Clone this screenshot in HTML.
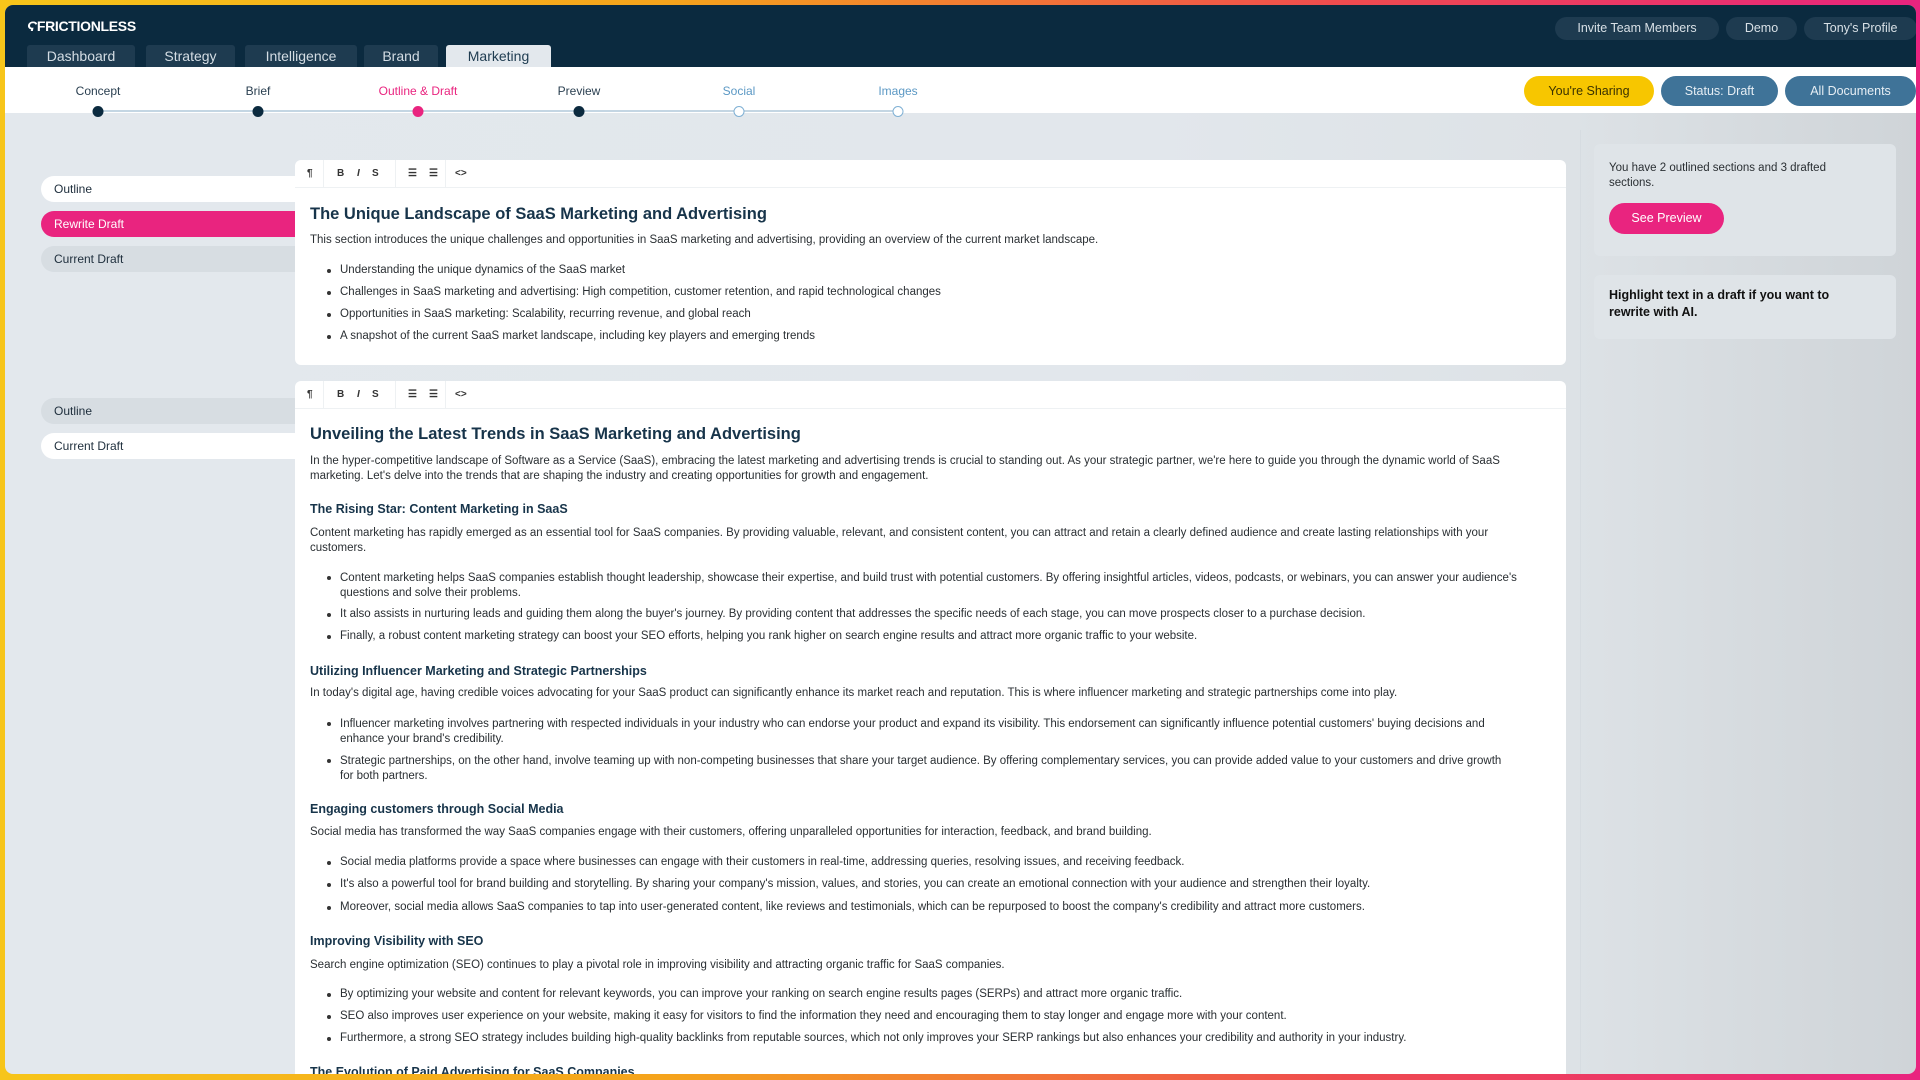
<!DOCTYPE html>
<html><head><meta charset="utf-8"><style>
*{box-sizing:border-box;margin:0;padding:0}
body{width:1920px;height:1080px;overflow:hidden;font-family:"Liberation Sans",sans-serif;background:linear-gradient(90deg,#f7c51a 0%,#f5a31c 35%,#ef4b4f 70%,#e9247f 100%);position:relative}
.frame{position:absolute;left:5px;top:5px;width:1911px;height:1069px;border-radius:8px;overflow:hidden;background:linear-gradient(90deg,#e3e8ed 0%,#e2e7ec 60%,#dde2e6 82%,#cfd4d8 100%)}
.hdr{position:absolute;left:0;top:0;width:100%;height:62px;background:#0b2a3f}
.logo{position:absolute;left:22px;top:13px;color:#fff;font-weight:bold;font-size:14px;letter-spacing:-0.3px}
.tab{position:absolute;top:40px;height:22px;background:#1e3b50;color:#d4dde4;font-size:14px;text-align:center;line-height:22px;border-radius:3px 3px 0 0}
.tab.on{background:#e3e8ed;color:#1e3b50}
.tb{position:absolute;top:12px;height:23px;background:#1e3b50;color:#d8e0e6;font-size:12.5px;line-height:23px;text-align:center;border-radius:12px}
.step{position:absolute;top:62px;left:0;width:100%;height:46px;background:#fff}
.sl{position:absolute;top:17px;font-size:12px;color:#2a3f50;transform:translateX(-50%);white-space:nowrap}
.line{position:absolute;top:43px;height:2px;background:#c4d6e3;left:93px;width:800px}
.dot{position:absolute;top:39px;width:11px;height:11px;border-radius:50%;background:#0b2a3f;transform:translateX(-50%)}
.dot.o{background:#fff;border:1.5px solid #7fb0d4}
.pb{position:absolute;top:9px;height:30px;border-radius:15px;font-size:12.5px;line-height:30px;text-align:center;color:#e6eef4;background:#3f7398}
.side{position:absolute;left:36px;width:260px;height:26px;border-radius:13px 0 0 13px;font-size:12px;line-height:26px;padding-left:13px;color:#1e2e3c;background:#fff}
.card{position:absolute;left:290px;width:1271px;background:#fff;border-radius:6px}
.tool{height:28px;border-bottom:1px solid #eef1f3;position:relative;font-size:10px;color:#333;font-weight:bold}
.tool span{position:absolute;top:8px}
.tool i.sep{position:absolute;top:0;width:1px;height:28px;background:#eef1f3}
.t{position:absolute;left:15px;white-space:nowrap;font-size:11.5px;color:#2a2f33}
.b{left:45px}
.b:before{content:"";position:absolute;left:-13px;top:5px;width:4px;height:4px;border-radius:50%;background:#333}
h1{position:absolute;left:15px;font-size:16.5px;color:#17344a;white-space:nowrap}
h2{position:absolute;left:15px;font-size:12.5px;color:#17344a;white-space:nowrap}
.lh{line-height:15px}
.rc{position:absolute;left:1589px;width:302px;background:#dfe4e8;border-radius:6px}
</style></head><body>
<div class="frame">
<div class="hdr">
<div class="logo"><span style="font-style:italic">&#x03DA;</span>FRICTIONLESS</div>
<div class="tab" style="left:22px;width:108px">Dashboard</div>
<div class="tab" style="left:141px;width:89px">Strategy</div>
<div class="tab" style="left:240px;width:112px">Intelligence</div>
<div class="tab" style="left:359px;width:74px">Brand</div>
<div class="tab on" style="left:441px;width:105px">Marketing</div>
<div class="tb" style="left:1550px;width:164px">Invite Team Members</div>
<div class="tb" style="left:1721px;width:71px">Demo</div>
<div class="tb" style="left:1799px;width:113px">Tony's Profile</div>
</div>
<div class="step">
<div class="line"></div>
<div class="sl" style="left:93px">Concept</div>
<div class="sl" style="left:253px">Brief</div>
<div class="sl" style="left:413px;color:#e9247f">Outline &amp; Draft</div>
<div class="sl" style="left:574px">Preview</div>
<div class="sl" style="left:734px;color:#5b98c4">Social</div>
<div class="sl" style="left:893px;color:#5b98c4">Images</div>
<div class="dot" style="left:93px"></div><div class="dot" style="left:253px"></div>
<div class="dot" style="left:413px;background:#e9247f"></div><div class="dot" style="left:574px"></div>
<div class="dot o" style="left:734px"></div><div class="dot o" style="left:893px"></div>
<div class="pb" style="left:1519px;width:130px;background:#f7c600;color:#3a3200">You're Sharing</div>
<div class="pb" style="left:1656px;width:117px">Status: Draft</div>
<div class="pb" style="left:1780px;width:131px">All Documents</div>
</div>

<div class="side" style="top:171px">Outline</div>
<div class="side" style="top:206px;background:#e9247f;color:#fff">Rewrite Draft</div>
<div class="side" style="top:241px;background:#d7dde2">Current Draft</div>
<div class="side" style="top:393px;background:#d7dde2">Outline</div>
<div class="side" style="top:428px">Current Draft</div>

<div class="card" style="top:155px;height:205px">
<div class="tool"><span style="left:12px">¶</span><i class="sep" style="left:28px"></i><span style="left:42px">B</span><span style="left:62px;font-style:italic">I</span><span style="left:77px">S</span><i class="sep" style="left:100px"></i><span style="left:113px">☰</span><span style="left:134px">☰</span><i class="sep" style="left:150px"></i><span style="left:160px">&lt;&gt;</span></div>
<h1 style="top:45px">The Unique Landscape of SaaS Marketing and Advertising</h1>
<div class="t" style="top:74px">This section introduces the unique challenges and opportunities in SaaS marketing and advertising, providing an overview of the current market landscape.</div>
<div class="t b" style="top:104px">Understanding the unique dynamics of the SaaS market</div>
<div class="t b" style="top:126px">Challenges in SaaS marketing and advertising: High competition, customer retention, and rapid technological changes</div>
<div class="t b" style="top:148px">Opportunities in SaaS marketing: Scalability, recurring revenue, and global reach</div>
<div class="t b" style="top:170px">A snapshot of the current SaaS market landscape, including key players and emerging trends</div>
</div>

<div class="card" style="top:376px;height:720px">
<div class="tool"><span style="left:12px">¶</span><i class="sep" style="left:28px"></i><span style="left:42px">B</span><span style="left:62px;font-style:italic">I</span><span style="left:77px">S</span><i class="sep" style="left:100px"></i><span style="left:113px">☰</span><span style="left:134px">☰</span><i class="sep" style="left:150px"></i><span style="left:160px">&lt;&gt;</span></div>
<h1 style="top:44px">Unveiling the Latest Trends in SaaS Marketing and Advertising</h1>
<div class="t lh" style="top:73px">In the hyper-competitive landscape of Software as a Service (SaaS), embracing the latest marketing and advertising trends is crucial to standing out. As your strategic partner, we're here to guide you through the dynamic world of SaaS<br>marketing. Let's delve into the trends that are shaping the industry and creating opportunities for growth and engagement.</div>
<h2 style="top:121px">The Rising Star: Content Marketing in SaaS</h2>
<div class="t lh" style="top:145px">Content marketing has rapidly emerged as an essential tool for SaaS companies. By providing valuable, relevant, and consistent content, you can attract and retain a clearly defined audience and create lasting relationships with your<br>customers.</div>
<div class="t b lh" style="top:190px">Content marketing helps SaaS companies establish thought leadership, showcase their expertise, and build trust with potential customers. By offering insightful articles, videos, podcasts, or webinars, you can answer your audience's<br>questions and solve their problems.</div>
<div class="t b" style="top:227px">It also assists in nurturing leads and guiding them along the buyer's journey. By providing content that addresses the specific needs of each stage, you can move prospects closer to a purchase decision.</div>
<div class="t b" style="top:249px">Finally, a robust content marketing strategy can boost your SEO efforts, helping you rank higher on search engine results and attract more organic traffic to your website.</div>
<h2 style="top:283px">Utilizing Influencer Marketing and Strategic Partnerships</h2>
<div class="t" style="top:306px">In today's digital age, having credible voices advocating for your SaaS product can significantly enhance its market reach and reputation. This is where influencer marketing and strategic partnerships come into play.</div>
<div class="t b lh" style="top:336px">Influencer marketing involves partnering with respected individuals in your industry who can endorse your product and expand its visibility. This endorsement can significantly influence potential customers' buying decisions and<br>enhance your brand's credibility.</div>
<div class="t b lh" style="top:373px">Strategic partnerships, on the other hand, involve teaming up with non-competing businesses that share your target audience. By offering complementary services, you can provide added value to your customers and drive growth<br>for both partners.</div>
<h2 style="top:421px">Engaging customers through Social Media</h2>
<div class="t" style="top:445px">Social media has transformed the way SaaS companies engage with their customers, offering unparalleled opportunities for interaction, feedback, and brand building.</div>
<div class="t b" style="top:475px">Social media platforms provide a space where businesses can engage with their customers in real-time, addressing queries, resolving issues, and receiving feedback.</div>
<div class="t b" style="top:497px">It's also a powerful tool for brand building and storytelling. By sharing your company's mission, values, and stories, you can create an emotional connection with your audience and strengthen their loyalty.</div>
<div class="t b" style="top:520px">Moreover, social media allows SaaS companies to tap into user-generated content, like reviews and testimonials, which can be repurposed to boost the company's credibility and attract more customers.</div>
<h2 style="top:553px">Improving Visibility with SEO</h2>
<div class="t" style="top:578px">Search engine optimization (SEO) continues to play a pivotal role in improving visibility and attracting organic traffic for SaaS companies.</div>
<div class="t b" style="top:607px">By optimizing your website and content for relevant keywords, you can improve your ranking on search engine results pages (SERPs) and attract more organic traffic.</div>
<div class="t b" style="top:629px">SEO also improves user experience on your website, making it easy for visitors to find the information they need and encouraging them to stay longer and engage more with your content.</div>
<div class="t b" style="top:651px">Furthermore, a strong SEO strategy includes building high-quality backlinks from reputable sources, which not only improves your SERP rankings but also enhances your credibility and authority in your industry.</div>
<h2 style="top:684px">The Evolution of Paid Advertising for SaaS Companies</h2>
</div>

<div style="position:absolute;left:1575px;top:125px;width:1px;height:950px;background:#d6dce1"></div>
<div class="rc" style="top:139px;height:112px">
<div style="position:absolute;left:15px;top:17px;font-size:11.5px;color:#2a2f33;line-height:15px">You have 2 outlined sections and 3 drafted<br>sections.</div>
<div style="position:absolute;left:15px;top:59px;width:115px;height:31px;border-radius:16px;background:#e9247f;color:#fff;font-size:12.5px;line-height:31px;text-align:center">See Preview</div>
</div>
<div class="rc" style="top:270px;height:64px">
<div style="position:absolute;left:15px;top:12px;font-size:12.5px;font-weight:bold;color:#111;line-height:17px">Highlight text in a draft if you want to<br>rewrite with AI.</div>
</div>
</div>
</body></html>
